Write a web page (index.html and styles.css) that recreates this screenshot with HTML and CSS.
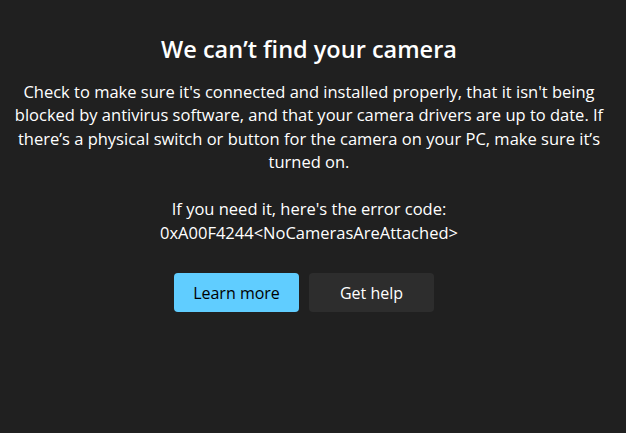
FILE: index.html
```html
<!DOCTYPE html>
<html lang="en">
<head>
    <meta charset="UTF-8">
    <meta name="viewport" content="width=device-width, initial-scale=1.0">
    <title>Camera</title>
    <link rel="stylesheet" href="styles.css">
</head>
<body>
    <div class="container">
        <h1>We can’t find your camera</h1>
        <p class="message">Check to make sure it's connected and installed properly, that it isn't being blocked by antivirus software, and that your camera drivers are up to date. If there’s a physical switch or button for the camera on your PC, make sure it’s turned on.</p>
        <p class="code">If you need it, here's the error code:<br>0xA00F4244&lt;NoCamerasAreAttached&gt;</p>
        <div class="actions">
            <button class="btn primary">Learn more</button>
            <button class="btn">Get help</button>
        </div>
    </div>
</body>
</html>
```

FILE: styles.css
```css
body {
    font-family: "Open Sans", "Noto Sans", sans-serif;
    background-color: #202020;
    color: #fff;
    margin: 0;
    padding: 0;
    min-height: 100vh;
}

.container {
    padding: 34px 20px 0 12px;
    text-align: center;
}

h1 {
    font-size: 23.5px;
    font-weight: 600;
    line-height: 30px;
    margin: 0 0 15.6px;
}

.message {
    font-size: 16.5px;
    line-height: 23.5px;
    margin: 0 0 23.5px;
}

.code {
    font-size: 16.5px;
    line-height: 23.5px;
    margin: 0;
}

.actions {
    display: flex;
    justify-content: center;
    gap: 10px;
    margin-top: 29px;
    padding-right: 10px;
}

.btn {
    width: 125px;
    height: 39px;
    border: none;
    border-radius: 4px;
    background-color: #2d2d2d;
    color: #fff;
    font-family: inherit;
    font-size: 16px;
}

.btn.primary {
    background-color: #60cdff;
    color: #000;
}
```
